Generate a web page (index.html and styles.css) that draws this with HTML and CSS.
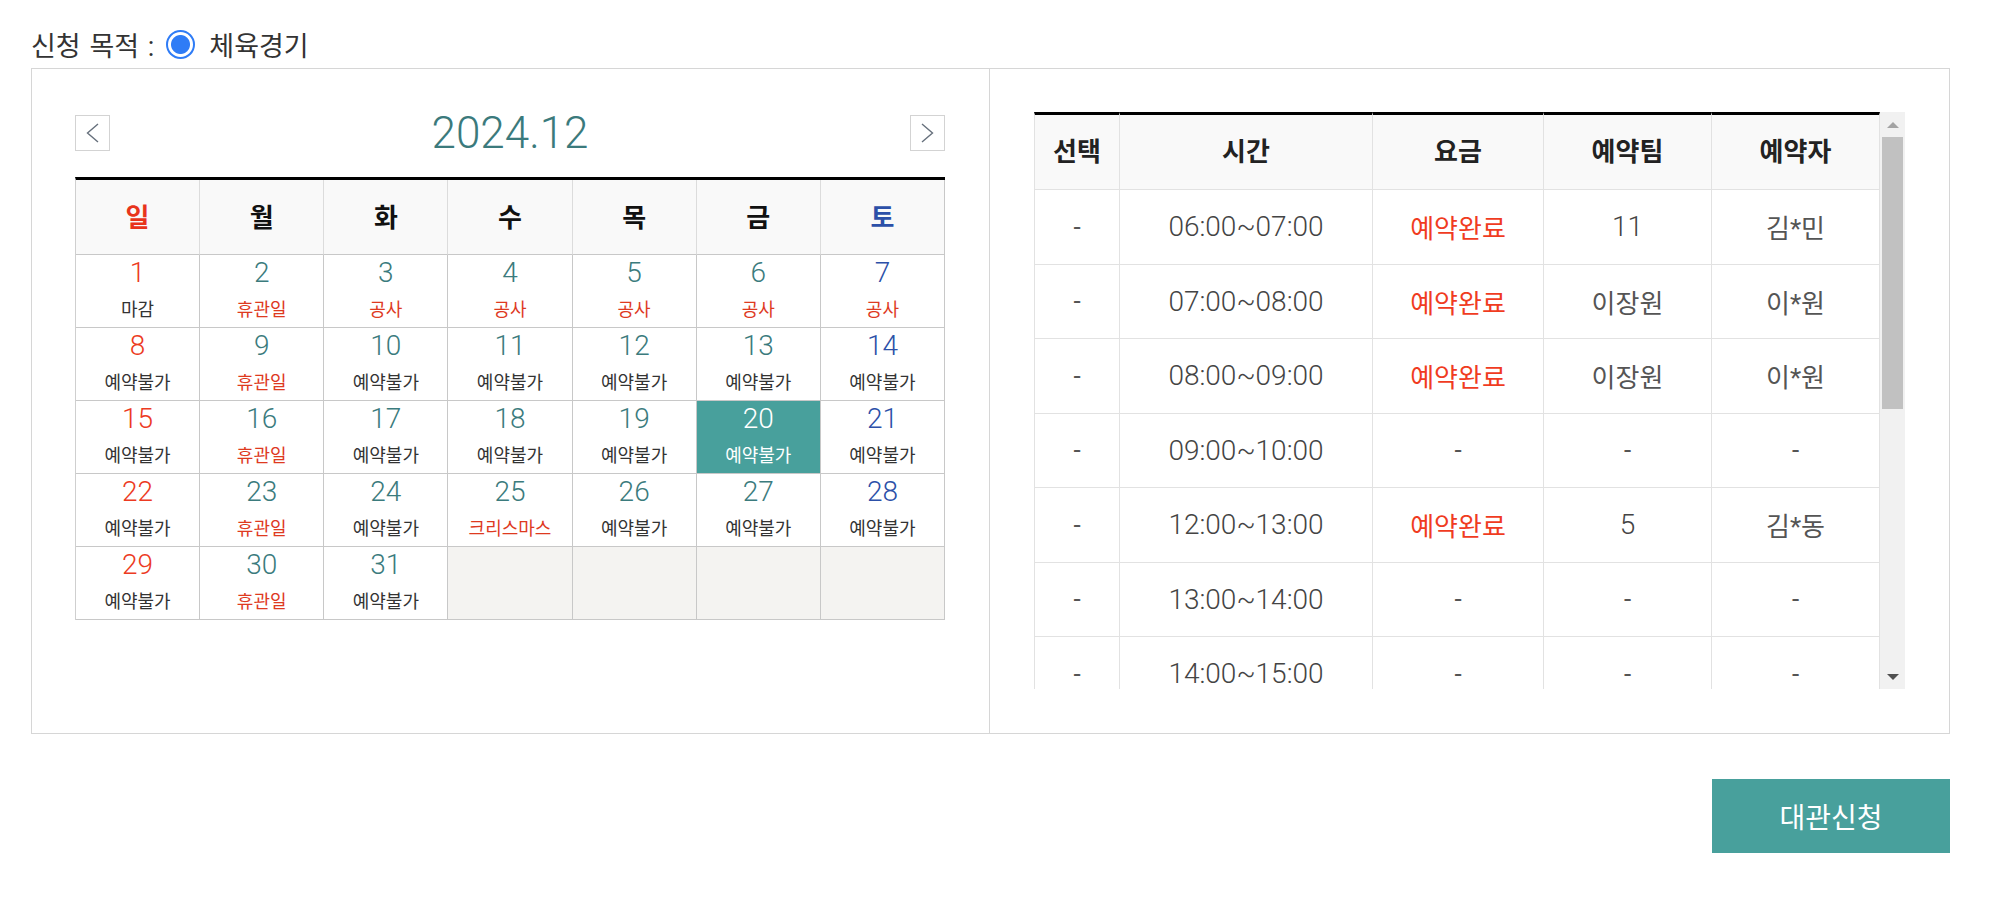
FILE: index.html
```html
<!DOCTYPE html>
<html lang="ko">
<head>
  <meta charset="UTF-8">
  <meta name="viewport" content="width=device-width, initial-scale=1.0">
  <title>대관신청</title>
  <link rel="stylesheet" href="styles.css">
</head>
<body>
  <div class="wrap">

    <!-- 신청 목적 -->
    <div class="purpose">
      <span class="purpose-label">신청 목적 :</span>
      <label class="radio-item"><span class="radio"></span>체육경기</label>
    </div>

    <div class="board">

      <!-- 달력 -->
      <div class="cal-panel">
        <div class="cal-nav">
          <button class="nav-btn" type="button">
            <svg width="13" height="20" viewBox="0 0 13 20"><polyline points="12,1 1.5,10 12,19" fill="none" stroke="#66707c" stroke-width="1.4"/></svg>
          </button>
          <h2 class="cal-title">2024.12</h2>
          <button class="nav-btn" type="button">
            <svg width="13" height="20" viewBox="0 0 13 20"><polyline points="1,1 11.5,10 1,19" fill="none" stroke="#66707c" stroke-width="1.4"/></svg>
          </button>
        </div>

        <table class="cal">
          <thead>
            <tr>
              <th class="sun">일</th><th>월</th><th>화</th><th>수</th><th>목</th><th>금</th><th class="sat">토</th>
            </tr>
          </thead>
          <tbody>
            <tr>
              <td class="sun"><span class="day">1</span><span class="note">마감</span></td>
              <td><span class="day">2</span><span class="note red">휴관일</span></td>
              <td><span class="day">3</span><span class="note red">공사</span></td>
              <td><span class="day">4</span><span class="note red">공사</span></td>
              <td><span class="day">5</span><span class="note red">공사</span></td>
              <td><span class="day">6</span><span class="note red">공사</span></td>
              <td class="sat"><span class="day">7</span><span class="note red">공사</span></td>
            </tr>
            <tr>
              <td class="sun"><span class="day">8</span><span class="note">예약불가</span></td>
              <td><span class="day">9</span><span class="note red">휴관일</span></td>
              <td><span class="day">10</span><span class="note">예약불가</span></td>
              <td><span class="day">11</span><span class="note">예약불가</span></td>
              <td><span class="day">12</span><span class="note">예약불가</span></td>
              <td><span class="day">13</span><span class="note">예약불가</span></td>
              <td class="sat"><span class="day">14</span><span class="note">예약불가</span></td>
            </tr>
            <tr>
              <td class="sun"><span class="day">15</span><span class="note">예약불가</span></td>
              <td><span class="day">16</span><span class="note red">휴관일</span></td>
              <td><span class="day">17</span><span class="note">예약불가</span></td>
              <td><span class="day">18</span><span class="note">예약불가</span></td>
              <td><span class="day">19</span><span class="note">예약불가</span></td>
              <td class="selected"><span class="day">20</span><span class="note">예약불가</span></td>
              <td class="sat"><span class="day">21</span><span class="note">예약불가</span></td>
            </tr>
            <tr>
              <td class="sun"><span class="day">22</span><span class="note">예약불가</span></td>
              <td><span class="day">23</span><span class="note red">휴관일</span></td>
              <td><span class="day">24</span><span class="note">예약불가</span></td>
              <td><span class="day">25</span><span class="note red">크리스마스</span></td>
              <td><span class="day">26</span><span class="note">예약불가</span></td>
              <td><span class="day">27</span><span class="note">예약불가</span></td>
              <td class="sat"><span class="day">28</span><span class="note">예약불가</span></td>
            </tr>
            <tr>
              <td class="sun"><span class="day">29</span><span class="note">예약불가</span></td>
              <td><span class="day">30</span><span class="note red">휴관일</span></td>
              <td><span class="day">31</span><span class="note">예약불가</span></td>
              <td class="empty"></td>
              <td class="empty"></td>
              <td class="empty"></td>
              <td class="empty"></td>
            </tr>
          </tbody>
        </table>
      </div>

      <!-- 시간 선택 -->
      <div class="time-panel">
        <div class="scroll-box">
          <div class="scroll-view">
            <table class="times">
              <colgroup>
                <col style="width: 86px">
                <col style="width: 253px">
                <col style="width: 171px">
                <col style="width: 168px">
                <col>
              </colgroup>
              <thead>
                <tr><th>선택</th><th>시간</th><th>요금</th><th>예약팀</th><th>예약자</th></tr>
              </thead>
              <tbody>
                <tr><td>-</td><td class="num">06:00~07:00</td><td class="done">예약완료</td><td class="num">11</td><td>김*민</td></tr>
                <tr><td>-</td><td class="num">07:00~08:00</td><td class="done">예약완료</td><td>이장원</td><td>이*원</td></tr>
                <tr><td>-</td><td class="num">08:00~09:00</td><td class="done">예약완료</td><td>이장원</td><td>이*원</td></tr>
                <tr><td>-</td><td class="num">09:00~10:00</td><td>-</td><td>-</td><td>-</td></tr>
                <tr><td>-</td><td class="num">12:00~13:00</td><td class="done">예약완료</td><td class="num">5</td><td>김*동</td></tr>
                <tr><td>-</td><td class="num">13:00~14:00</td><td>-</td><td>-</td><td>-</td></tr>
                <tr><td>-</td><td class="num">14:00~15:00</td><td>-</td><td>-</td><td>-</td></tr>
                <tr><td>-</td><td class="num">15:00~16:00</td><td>-</td><td>-</td><td>-</td></tr>
              </tbody>
            </table>
          </div>
          <!-- scrollbar -->
          <div class="scrollbar">
            <span class="sb-btn"><i class="arrow-up"></i></span>
            <span class="sb-track"><span class="sb-thumb"></span></span>
            <span class="sb-btn"><i class="arrow-down"></i></span>
          </div>
        </div>
      </div>

    </div>

    <div class="apply-row">
      <button class="btn-apply" type="button">대관신청</button>
    </div>

  </div>
</body>
</html>
```

FILE: styles.css
```css
/* Reset */
* {
  margin: 0;
  padding: 0;
  box-sizing: border-box;
}

body {
  font-family: Roboto, "Noto Sans CJK KR", sans-serif;
  color: #333;
  background-color: #fff;
}

.wrap {
  padding: 20px 52px 0 31px;
}

/* 신청 목적 */
.purpose {
  display: flex;
  align-items: center;
  height: 48px;
  font-size: 27px;
  color: #333;
}

.purpose-label {
  margin-right: 12px;
  word-spacing: 2px;
}

.radio-item {
  display: flex;
  align-items: center;
}

.radio {
  width: 29px;
  height: 29px;
  margin-right: 14px;
  border: 2px solid #2f7cf6;
  border-radius: 50%;
  background: radial-gradient(circle, #2f7cf6 0 9px, #fff 10px);
}

/* Board */
.board {
  display: flex;
  border: 1px solid #d6d6d6;
}

.cal-panel {
  width: 958px;
  padding: 46px 44px 0 43px;
  border-right: 1px solid #d6d6d6;
}

.cal-nav {
  display: flex;
  align-items: center;
  justify-content: space-between;
  height: 36px;
  margin-bottom: 26px;
}

.nav-btn {
  display: flex;
  align-items: center;
  justify-content: center;
  width: 35px;
  height: 36px;
  border: 1px solid #d3d3d3;
  background-color: #fff;
}

.cal-title {
  font-size: 44px;
  font-weight: 300;
  color: #3b7a7c;
  line-height: 36px;
}

/* Calendar */
.cal {
  width: 870px;
  table-layout: fixed;
  border-collapse: separate;
  border-spacing: 0;
  border-top: 3px solid #000;
  border-left: 1px solid #cfcfcf;
}

.cal th {
  height: 75px;
  padding-bottom: 3px;
  background-color: #f9f9f9;
  border-right: 1px solid #dcdcdc;
  border-bottom: 1px solid #c8c8c8;
  font-size: 26px;
  font-weight: 700;
  color: #111;
}

.cal th:last-child,
.cal td:last-child {
  border-right-color: #c8c8c8;
}

.cal th.sun { color: #e8341c; }
.cal th.sat { color: #2c50a8; }

.cal td {
  height: 73px;
  padding-top: 2px;
  vertical-align: top;
  text-align: center;
  border-right: 1px solid #c8c8c8;
  border-bottom: 1px solid #c8c8c8;
  color: #3b7b7d;
}

.cal td.sun { color: #ec3a22; }
.cal td.sat { color: #2c50a8; }

.cal td.empty {
  background-color: #f4f3f1;
}

.cal td.selected {
  background-color: #48a09c;
  color: #fff;
}

.day {
  display: block;
  font-size: 28px;
  font-weight: 300;
  line-height: 32px;
}

.note {
  display: block;
  margin-top: 11px;
  font-size: 18px;
  line-height: 20px;
  color: #333;
}

.note.red { color: #de3a1f; }
.selected .note { color: #fff; }

/* Time table */
.time-panel {
  flex: 1;
  padding: 43px 44px 44px;
}

.scroll-box {
  display: flex;
  height: 577px;
}

.scroll-view {
  flex: 1;
  overflow: hidden;
}

.scrollbar {
  display: flex;
  flex-direction: column;
  width: 25px;
  background-color: #f1f1f1;
}

.sb-btn {
  display: flex;
  align-items: center;
  justify-content: center;
  height: 25px;
}

.sb-track {
  flex: 1;
  padding: 0 2px;
}

.sb-thumb {
  display: block;
  height: 272px;
  background-color: #c1c1c1;
}

.arrow-up {
  border-left: 6px solid transparent;
  border-right: 6px solid transparent;
  border-bottom: 6px solid #a3a3a3;
}

.arrow-down {
  border-left: 6px solid transparent;
  border-right: 6px solid transparent;
  border-top: 6px solid #505050;
}

.times {
  width: 100%;
  table-layout: fixed;
  border-collapse: separate;
  border-spacing: 0;
  text-align: center;
}

.times th {
  height: 78px;
  padding-bottom: 5px;
  background-color: #f9f9f9;
  border-top: 3px solid #000;
  border-right: 1px solid #e2e2e2;
  border-bottom: 1px solid #e2e2e2;
  font-size: 26px;
  font-weight: 700;
  color: #222;
}

.times td {
  height: 74.5px;
  border-right: 1px solid #e2e2e2;
  border-bottom: 1px solid #e2e2e2;
  font-size: 26px;
  color: #555;
}

.times th:first-child,
.times td:first-child {
  border-left: 1px solid #e2e2e2;
}

.times td.num {
  font-size: 28px;
  font-weight: 300;
  color: #444;
}

.times td.done {
  color: #f03c1f;
}

/* Button */
.apply-row {
  display: flex;
  justify-content: flex-end;
  margin-top: 45px;
}

.btn-apply {
  width: 238px;
  height: 74px;
  border: 0;
  background-color: #48a09c;
  color: #fff;
  font-family: "Noto Sans CJK KR", sans-serif;
  font-size: 28px;
}
```
